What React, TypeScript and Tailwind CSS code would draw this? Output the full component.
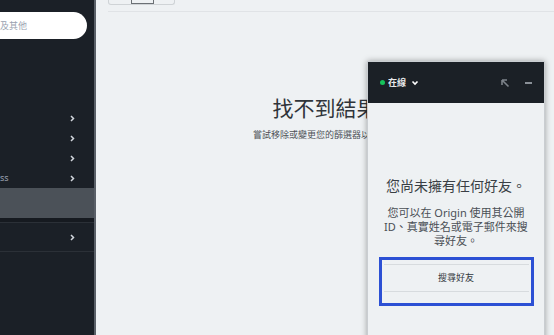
import React from "react";

function Chevron() {
  return (
    <svg width="5" height="7" viewBox="0 0 5 7" className="text-gray-300">
      <path d="M1 1l2.5 2.5L1 6" stroke="currentColor" strokeWidth="1.5" fill="none" />
    </svg>
  );
}

function NavRow({ label }: { label?: string }) {
  return (
    <div className="flex h-[20px] items-center justify-between pr-[19px] text-[9px] text-gray-400">
      <span>{label}</span>
      <Chevron />
    </div>
  );
}

function FriendsPanel() {
  return (
    <div className="absolute left-[271px] top-[61px] w-[178px] h-[300px] bg-[#eef1f3] border border-[#c9cdd1] shadow-[0_0_6px_rgba(0,0,0,0.35)]">
      <div className="flex h-[41px] items-center bg-[#1b2026] px-[12px]">
        <span className="h-[5px] w-[5px] rounded-full bg-[#16c25a]" />
        <span className="ml-[3px] text-[9px] font-bold text-[#e8eaec]">在線</span>
        <svg width="8" height="6" viewBox="0 0 8 6" className="ml-[5px] text-white">
          <path d="M1.5 1.5L4 4l2.5-2.5" stroke="currentColor" strokeWidth="1.6" fill="none" />
        </svg>
        <div className="flex-1" />
        <svg width="10" height="10" viewBox="0 0 10 10" className="text-[#7d838a]">
          <path d="M2 2h5M2 2v5M2 2l6.5 6.5" stroke="currentColor" strokeWidth="1.6" fill="none" />
        </svg>
        <span className="ml-[15px] h-[2px] w-[7px] bg-[#8a9097]" />
      </div>
      <div className="flex flex-col items-center pt-[74px]">
        <div className="text-[14px] leading-[18px] text-[#3a3f45]">您尚未擁有任何好友。</div>
        <div className="mt-[11px] w-[150px] text-center text-[11px] leading-[14px] text-[#4a4f55]">
          您可以在 Origin 使用其公開 ID、真實姓名或電子郵件來搜尋好友。
        </div>
        <div className="mt-[9px] w-[155px] border-[3px] border-[#2c50d4] px-[2px] pt-[4px] pb-[11px]">
          <div className="flex h-[28px] items-center justify-center border-y border-[#d7dbde] text-[9px] text-[#33383d]">
            搜尋好友
          </div>
        </div>
      </div>
    </div>
  );
}

export default function App() {
  return (
    <div
      className="flex h-[335px] w-[554px] overflow-hidden bg-[#eef1f3]"
      style={{ fontFamily: '"Noto Sans", "Noto Sans CJK TC", sans-serif' }}
    >
      <aside className="flex w-[96px] shrink-0 flex-col border-r-2 border-[#5a6068] bg-[#1b2027]">
        <div className="mt-[12px] flex h-[27px] w-[87px] items-center rounded-r-full bg-white">
          <span className="text-[9px] text-gray-400">及其他</span>
        </div>
        <div className="mt-[69px]">
          <NavRow />
          <NavRow />
          <NavRow />
          <NavRow label="ss" />
        </div>
        <div className="h-[30px] bg-[#4b5158]" />
        <div className="h-[5px] border-b border-[#2b3037] bg-[#161a20]" />
        <div className="flex h-[29px] items-center justify-between border-b border-[#2b3037] pr-[19px]">
          <span />
          <Chevron />
        </div>
      </aside>
      <main className="relative flex-1">
        <div className="ml-[12px] flex h-[5px] w-[67px] rounded-b-[3px] border-x border-b border-[#cfd3d6]">
          <div className="w-[22px]" />
          <div className="w-[23px] border-x border-b border-[#6b7075]" />
        </div>
        <div className="ml-[12px] mt-[6px] h-[1px] bg-[#e0e3e6]" />
        <div className="mt-[82px] flex flex-col items-center">
          <div className="text-[21px] leading-[28px] text-[#2f3439]">找不到結果</div>
          <div className="mt-[6px] text-[9px] text-[#4d5257]">嘗試移除或變更您的篩選器以查看。</div>
        </div>
        <FriendsPanel />
      </main>
    </div>
  );
}
